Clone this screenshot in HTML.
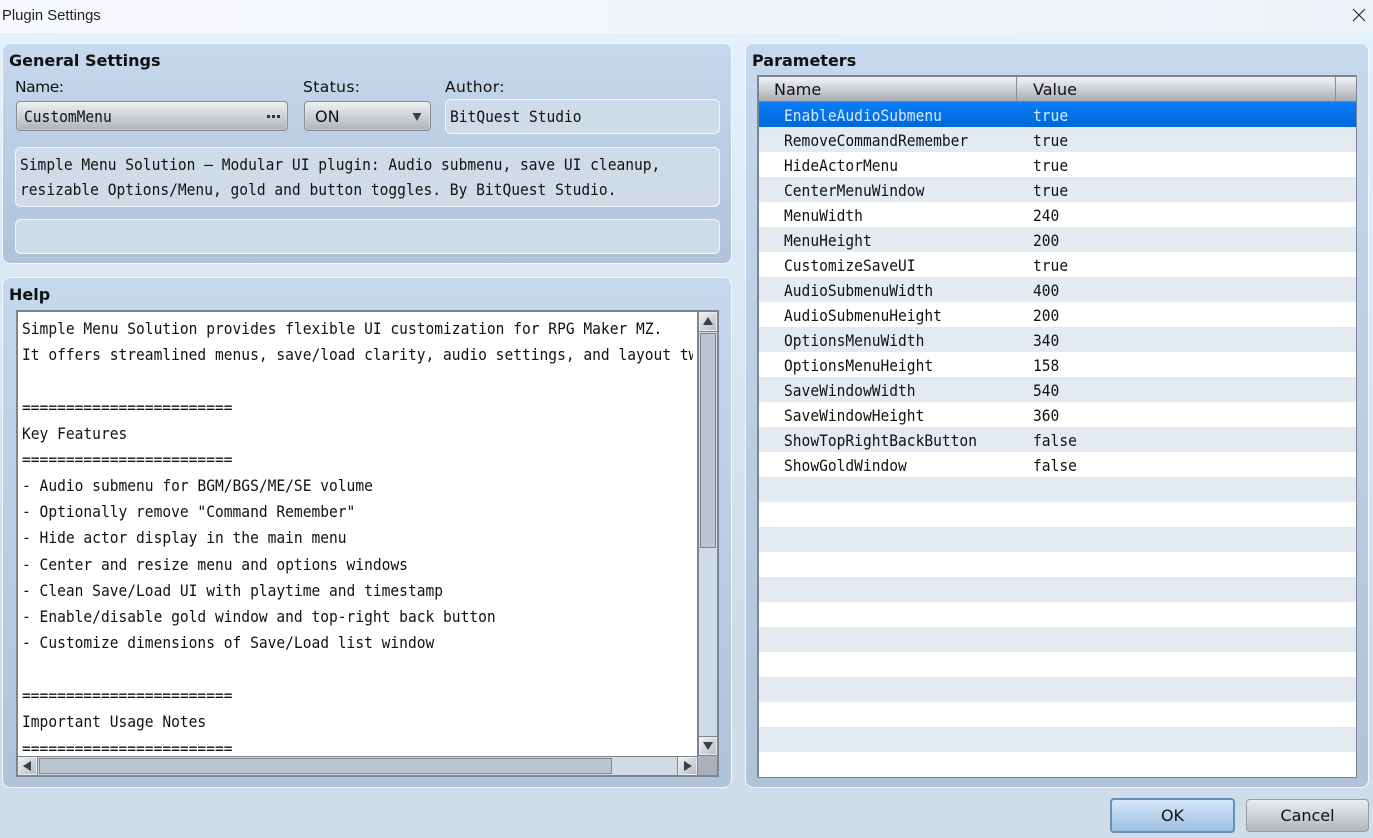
<!DOCTYPE html>
<html><head><meta charset="utf-8"><style>
*{box-sizing:border-box}
html,body{margin:0;padding:0}
body{width:1373px;height:838px;overflow:hidden;position:relative;background:linear-gradient(#e5f0fd 33px,#d0dce8 640px);font-family:"DejaVu Sans",sans-serif;color:#111}
div{position:absolute}
.t{white-space:pre;line-height:20px;height:20px}
.m{font-family:"DejaVu Sans Mono",monospace;font-size:16px;transform:translateY(1px) scaleX(.9106);transform-origin:0 0}
.z .m{transform:scaleX(.9106)}
.b{font-weight:bold;font-size:16px}
.l{font-size:15.5px}
.panel{border:1px solid #f3f8fe;border-radius:8px;background:linear-gradient(#c6d8ee,#b0c3d9)}
.field{background:#cfdbe6;border:1px solid #f2f6fa;border-radius:6px}
.btn{border:1px solid #868c93;border-radius:4px;background:linear-gradient(#eef1f3,#aeb3b9);box-shadow:inset 0 0 0 1px rgba(255,255,255,.25)}
.sb{background:linear-gradient(135deg,#eef1f3,#b5bcc3);border:1px solid #e8edf1}
svg{position:absolute;display:block}
.row{left:0;width:596px;height:25px}
.a{background:#e3eaf1}
</style></head><body>

<div style="left:0;top:0;width:1373px;height:33px;background:linear-gradient(90deg,#f7f9fd,#edf3f8)"></div>
<div class="t" style="left:2px;top:6px;font-family:'Liberation Sans',sans-serif;font-size:14.8px;color:#222">Plugin Settings</div>
<svg style="left:1352px;top:8px" width="14" height="14" viewBox="0 0 14 14"><path d="M1 1L13 13M13 1L1 13" stroke="#222" stroke-width="1.1" fill="none"/></svg>

<div class="panel" style="left:2px;top:43px;width:730px;height:221px"></div>
<div class="t b" style="left:9px;top:51px">General Settings</div>
<div class="t l" style="left:15px;top:77px;letter-spacing:-.5px">Name:</div>
<div class="t l" style="left:303px;top:77px;letter-spacing:.4px">Status:</div>
<div class="t l" style="left:445px;top:77px;letter-spacing:.4px">Author:</div>

<div class="btn" style="left:16px;top:101px;width:272px;height:30px"></div>
<div class="t m" style="left:24px;top:106px">CustomMenu</div>
<div style="left:267px;top:115px;width:3px;height:3px;background:#333"></div>
<div style="left:272px;top:115px;width:3px;height:3px;background:#333"></div>
<div style="left:277px;top:115px;width:3px;height:3px;background:#333"></div>

<div class="btn" style="left:304px;top:101px;width:127px;height:30px"></div>
<div class="t" style="left:315px;top:107px;font-size:16px">ON</div>
<svg style="left:412px;top:112px" width="10" height="10" viewBox="0 0 10 10"><path d="M0.5 1H9.5L5 9Z" fill="#3c4046"/></svg>

<div class="field" style="left:445px;top:99px;width:275px;height:35px"></div>
<div class="t m" style="left:450px;top:106px">BitQuest Studio</div>

<div class="field" style="left:15px;top:147px;width:705px;height:60px"></div>
<div class="t m" style="left:20px;top:154px">Simple Menu Solution — Modular UI plugin: Audio submenu, save UI cleanup,</div>
<div class="t m" style="left:20px;top:179px">resizable Options/Menu, gold and button toggles. By BitQuest Studio.</div>
<div class="field" style="left:15px;top:219px;width:705px;height:35px"></div>

<div class="panel" style="left:2px;top:277px;width:730px;height:511px"></div>
<div class="t b" style="left:9px;top:285px">Help</div>
<div style="left:16px;top:310px;width:703px;height:467px;background:#7f858d"></div>
<div style="left:18px;top:312px;width:679px;height:444px;background:#fff"></div>
<div class="z" style="left:18px;top:312px;width:675px;height:444px;overflow:hidden">
<div class="t m" style="left:4px;top:7px">Simple Menu Solution provides flexible UI customization for RPG Maker MZ.</div>
<div class="t m" style="left:4px;top:33px">It offers streamlined menus, save/load clarity, audio settings, and layout tweaks.</div>
<div class="t m" style="left:4px;top:86px">========================</div>
<div class="t m" style="left:4px;top:112px">Key Features</div>
<div class="t m" style="left:4px;top:138px">========================</div>
<div class="t m" style="left:4px;top:164px">- Audio submenu for BGM/BGS/ME/SE volume</div>
<div class="t m" style="left:4px;top:190px">- Optionally remove "Command Remember"</div>
<div class="t m" style="left:4px;top:216px">- Hide actor display in the main menu</div>
<div class="t m" style="left:4px;top:243px">- Center and resize menu and options windows</div>
<div class="t m" style="left:4px;top:269px">- Clean Save/Load UI with playtime and timestamp</div>
<div class="t m" style="left:4px;top:295px">- Enable/disable gold window and top-right back button</div>
<div class="t m" style="left:4px;top:321px">- Customize dimensions of Save/Load list window</div>
<div class="t m" style="left:4px;top:374px">========================</div>
<div class="t m" style="left:4px;top:400px">Important Usage Notes</div>
<div class="t m" style="left:4px;top:427px">========================</div>
</div>

<div style="left:699px;top:332px;width:18px;height:404px;background:#cfdbe7"></div>
<div style="left:700px;top:333px;width:16px;height:215px;background:#bac5d1;border:1px solid #7f858d"></div>
<div class="sb" style="left:699px;top:312px;width:18px;height:19px"></div>
<svg style="left:702px;top:316px" width="12" height="10" viewBox="0 0 12 10"><path d="M6 1L11 9H1Z" fill="#3c4046"/></svg>
<div class="sb" style="left:699px;top:737px;width:18px;height:18px"></div>
<svg style="left:702px;top:741px" width="12" height="10" viewBox="0 0 12 10"><path d="M1 1H11L6 9Z" fill="#3c4046"/></svg>

<div style="left:38px;top:757px;width:639px;height:18px;background:#cfdbe7"></div>
<div style="left:39px;top:758px;width:573px;height:16px;background:#bac5d1;border:1px solid #7f858d"></div>
<div class="sb" style="left:18px;top:757px;width:19px;height:18px"></div>
<svg style="left:22px;top:760px" width="10" height="12" viewBox="0 0 10 12"><path d="M1 6L9 1V11Z" fill="#3c4046"/></svg>
<div class="sb" style="left:678px;top:757px;width:19px;height:18px"></div>
<svg style="left:683px;top:760px" width="10" height="12" viewBox="0 0 10 12"><path d="M1 1L9 6L1 11Z" fill="#3c4046"/></svg>
<div style="left:698px;top:756px;width:19px;height:19px;background:#a9afbb"></div>

<div class="panel" style="left:745px;top:43px;width:624px;height:745px"></div>
<div class="t b" style="left:752px;top:51px">Parameters</div>
<div style="left:757px;top:75px;width:600px;height:703px;background:#7f858d"></div>
<div class="z" style="left:759px;top:77px;width:597px;height:700px;background:#fff;overflow:hidden">
<div style="left:0;top:0;width:597px;height:24px;background:linear-gradient(#f1f3f5,#a9aeb4)"></div>
<div style="left:0;top:24px;width:597px;height:1px;background:#7f858d"></div>
<div style="left:257px;top:0;width:1px;height:24px;background:#8a9097"></div>
<div style="left:576px;top:0;width:1px;height:24px;background:#8a9097"></div>
<div class="t" style="left:15px;top:3px;font-size:16px">Name</div>
<div class="t" style="left:274px;top:3px;font-size:16px">Value</div>
<div class="row" style="top:25px;width:597px;background:linear-gradient(#0a7dfb,#0068d8)"></div>
<div class="row a" style="top:50px;width:597px"></div>
<div class="row a" style="top:100px;width:597px"></div>
<div class="row a" style="top:150px;width:597px"></div>
<div class="row a" style="top:200px;width:597px"></div>
<div class="row a" style="top:250px;width:597px"></div>
<div class="row a" style="top:300px;width:597px"></div>
<div class="row a" style="top:350px;width:597px"></div>
<div class="row a" style="top:400px;width:597px"></div>
<div class="row a" style="top:450px;width:597px"></div>
<div class="row a" style="top:500px;width:597px"></div>
<div class="row a" style="top:550px;width:597px"></div>
<div class="row a" style="top:600px;width:597px"></div>
<div class="row a" style="top:650px;width:597px"></div>
<div class="t m" style="left:25px;top:29px;color:#d7e9ff">EnableAudioSubmenu</div><div class="t m" style="left:274px;top:29px;color:#d7e9ff">true</div>
<div class="t m" style="left:25px;top:54px">RemoveCommandRemember</div><div class="t m" style="left:274px;top:54px">true</div>
<div class="t m" style="left:25px;top:79px">HideActorMenu</div><div class="t m" style="left:274px;top:79px">true</div>
<div class="t m" style="left:25px;top:104px">CenterMenuWindow</div><div class="t m" style="left:274px;top:104px">true</div>
<div class="t m" style="left:25px;top:129px">MenuWidth</div><div class="t m" style="left:274px;top:129px">240</div>
<div class="t m" style="left:25px;top:154px">MenuHeight</div><div class="t m" style="left:274px;top:154px">200</div>
<div class="t m" style="left:25px;top:179px">CustomizeSaveUI</div><div class="t m" style="left:274px;top:179px">true</div>
<div class="t m" style="left:25px;top:204px">AudioSubmenuWidth</div><div class="t m" style="left:274px;top:204px">400</div>
<div class="t m" style="left:25px;top:229px">AudioSubmenuHeight</div><div class="t m" style="left:274px;top:229px">200</div>
<div class="t m" style="left:25px;top:254px">OptionsMenuWidth</div><div class="t m" style="left:274px;top:254px">340</div>
<div class="t m" style="left:25px;top:279px">OptionsMenuHeight</div><div class="t m" style="left:274px;top:279px">158</div>
<div class="t m" style="left:25px;top:304px">SaveWindowWidth</div><div class="t m" style="left:274px;top:304px">540</div>
<div class="t m" style="left:25px;top:329px">SaveWindowHeight</div><div class="t m" style="left:274px;top:329px">360</div>
<div class="t m" style="left:25px;top:354px">ShowTopRightBackButton</div><div class="t m" style="left:274px;top:354px">false</div>
<div class="t m" style="left:25px;top:379px">ShowGoldWindow</div><div class="t m" style="left:274px;top:379px">false</div>
</div>

<div style="left:1110px;top:798px;width:125px;height:35px;border:2px solid #6690ba;border-radius:4px;background:linear-gradient(#d6e8fa,#9dbfe2)"></div>
<div class="t" style="left:1110px;top:806px;width:125px;text-align:center;font-size:16px">OK</div>
<div style="left:1246px;top:799px;width:123px;height:33px;border:1px solid #989da3;border-radius:4px;background:linear-gradient(#eaedf0,#b2b6ba)"></div>
<div class="t" style="left:1246px;top:806px;width:123px;text-align:center;font-size:16px">Cancel</div>
</body></html>
